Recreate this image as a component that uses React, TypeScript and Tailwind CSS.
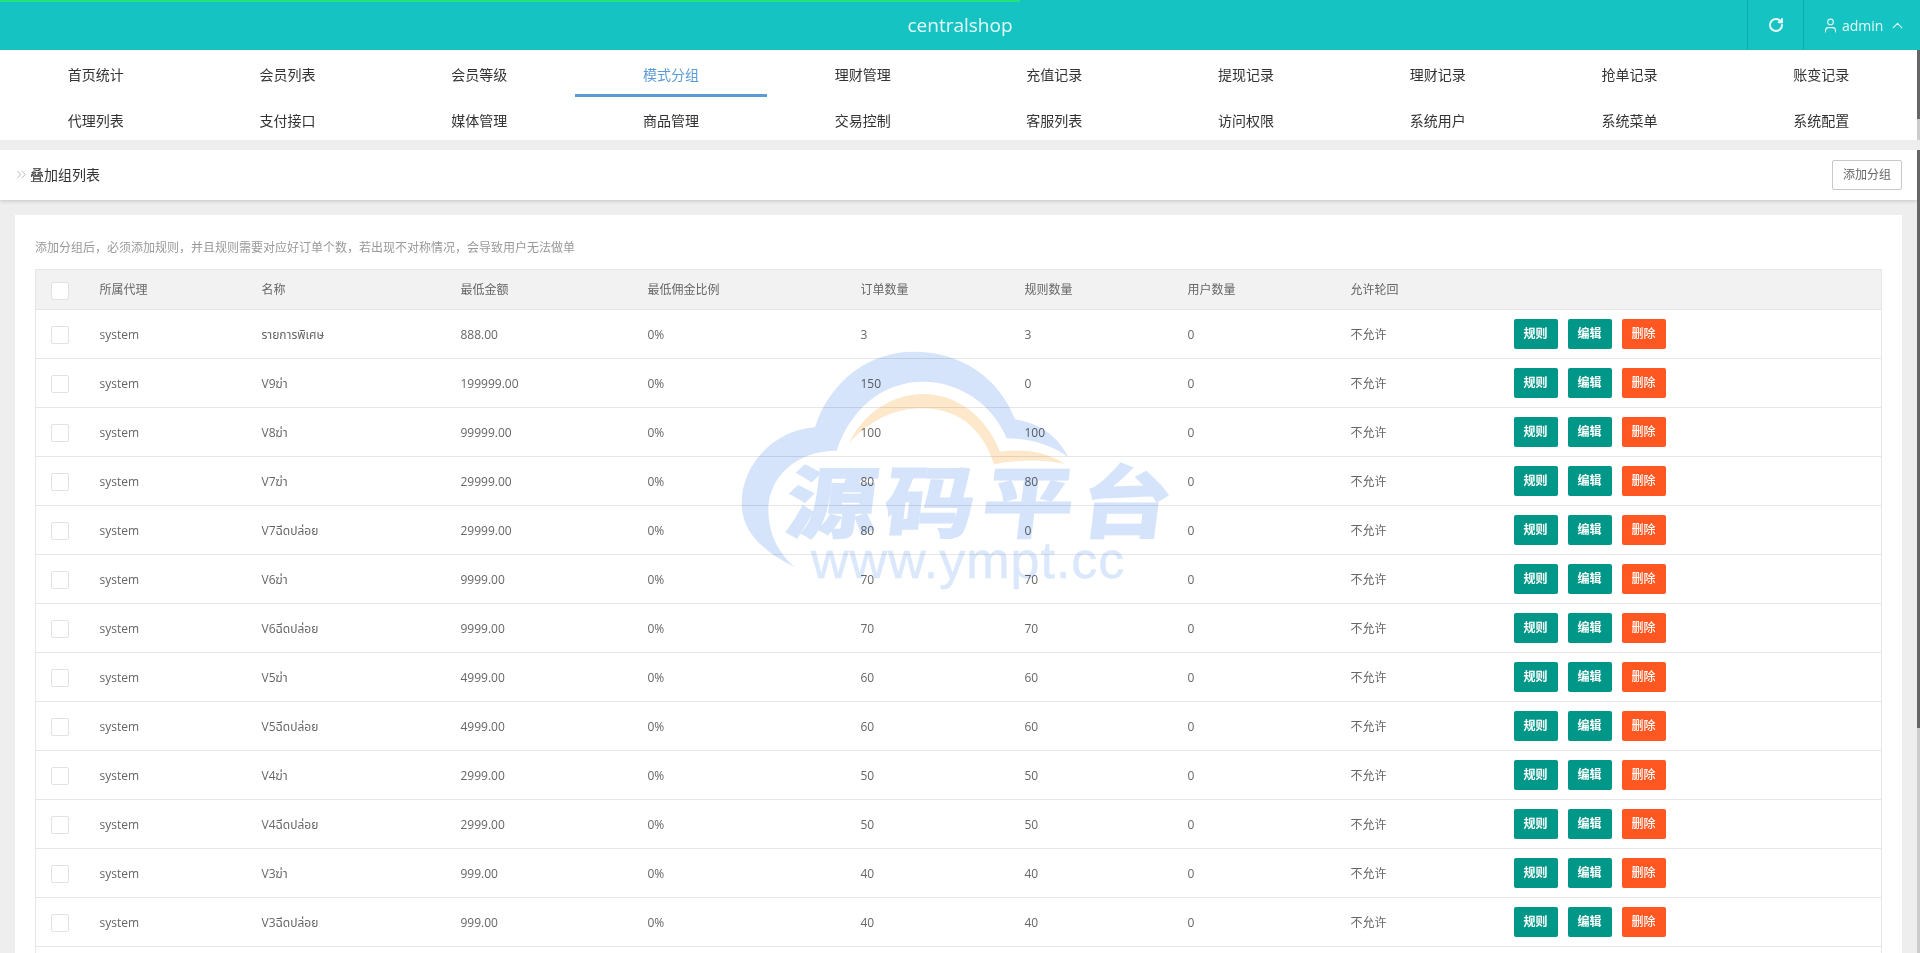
import { ChevronUp, ChevronsRight, RotateCw, User } from "lucide-react";

const navItems = [
  ["首页统计", "会员列表", "会员等级", "模式分组", "理财管理", "充值记录", "提现记录", "理财记录", "抢单记录", "账变记录"],
  ["代理列表", "支付接口", "媒体管理", "商品管理", "交易控制", "客服列表", "访问权限", "系统用户", "系统菜单", "系统配置"],
];

const columns = ["所属代理", "名称", "最低金额", "最低佣金比例", "订单数量", "规则数量", "用户数量", "允许轮回"];

const rows: [string, string, string, string][] = [
  ["รายการพิเศษ", "888.00", "3", "3"],
  ["V9ฆ่า", "199999.00", "150", "0"],
  ["V8ฆ่า", "99999.00", "100", "100"],
  ["V7ฆ่า", "29999.00", "80", "80"],
  ["V7ฉีดปล่อย", "29999.00", "80", "0"],
  ["V6ฆ่า", "9999.00", "70", "70"],
  ["V6ฉีดปล่อย", "9999.00", "70", "70"],
  ["V5ฆ่า", "4999.00", "60", "60"],
  ["V5ฉีดปล่อย", "4999.00", "60", "60"],
  ["V4ฆ่า", "2999.00", "50", "50"],
  ["V4ฉีดปล่อย", "2999.00", "50", "50"],
  ["V3ฆ่า", "999.00", "40", "40"],
  ["V3ฉีดปล่อย", "999.00", "40", "40"],
  ["V2ฆ่า", "499.00", "30", "30"],
];

function Checkbox() {
  return <div className="h-[18px] w-[18px] rounded-[2px] border border-[#e2e2e2] bg-white" />;
}

function Watermark() {
  return (
    <div className="pointer-events-none absolute left-[700px] top-[330px] h-[280px] w-[520px] mix-blend-multiply">
      <svg viewBox="0 0 1560 840" className="absolute inset-0 h-full w-full">
        <path
          fill="#d5e4fa"
          d="M285 712C180 660 125 600 125 520C125 400 225 300 345 292C390 150 510 65 640 65C790 65 900 150 945 268C1020 280 1075 320 1105 382C1060 345 990 325 920 325C880 225 780 155 670 155C545 155 450 240 410 362C290 362 205 440 205 540C205 610 235 670 285 712Z"
        />
        <path
          fill="#fde8cb"
          d="M447 340C490 250 575 192 670 192C770 192 860 260 900 365C970 355 1040 365 1095 402C1020 385 950 390 882 403C845 290 770 235 665 235C575 235 500 280 447 340Z"
        />
      </svg>
      <div className="absolute left-[88px] top-[122px] -skew-x-6 scale-y-[0.86] whitespace-nowrap text-[90px] font-bold leading-[90px] tracking-[8px] text-[#d5e4fa] [-webkit-text-stroke:3px_#d5e4fa] font-['Noto_Sans_CJK_SC',sans-serif]">
        源码平台
      </div>
      <div className="absolute left-[111px] top-[202px] whitespace-nowrap text-[52px] leading-[56px] tracking-[1px] text-[#dbe8fb] [-webkit-text-stroke:0.5px_#dbe8fb] font-['Liberation_Sans',sans-serif]">
        www.ympt.cc
      </div>
    </div>
  );
}

export default function App() {
  return (
    <div className="relative flex h-screen flex-col overflow-hidden bg-[#eeeeee] text-[#666666] font-['Open_Sans','Noto_Sans','Noto_Sans_Thai','Noto_Sans_CJK_SC',sans-serif]">
      {/* top bar */}
      <header className="relative flex h-[50px] shrink-0 items-center justify-end bg-[#15c3c3] text-white/90">
        <div className="absolute left-0 top-0 h-[2px] w-[1020px] bg-[#25e27f]" />
        <div className="absolute left-1/2 -translate-x-1/2 text-[19px] font-medium leading-[50px]">centralshop</div>
        <div className="flex h-full w-[56px] items-center justify-center border-l border-[#10abab]">
          <RotateCw size={16} strokeWidth={3} />
        </div>
        <div className="flex h-full w-[117px] items-center gap-[3px] border-l border-[#10abab] pl-[18px] text-[14px]">
          <User size={17} strokeWidth={1.5} />
          <span>admin</span>
          <ChevronUp size={17} strokeWidth={1.6} className="ml-[3px]" />
        </div>
      </header>

      {/* menu */}
      <div className="flex h-[90px] shrink-0">
        <nav className="h-full flex-1 overflow-hidden bg-white">
          {navItems.map((items, i) => (
            <div key={i} className="grid h-[47px] grid-cols-10">
              {items.map((label) => {
                const active = label === "模式分组";
                return (
                  <div
                    key={label}
                    className={
                      active
                        ? "flex items-center justify-center border-b-[3px] border-[#5b9bd5] pt-[5px] text-[14px] text-[#5b9bd5]"
                        : i === 0
                          ? "flex items-center justify-center pt-[5px] pb-[3px] text-[14px] text-[#333333]"
                          : "flex items-center justify-center pt-[3px] pb-[3px] text-[14px] text-[#333333]"
                    }
                  >
                    {label}
                  </div>
                );
              })}
            </div>
          ))}
        </nav>
        <div className="w-[3px] bg-[#cccccc]">
          <div className="h-[69px] bg-[#666666]" />
        </div>
      </div>

      <div className="h-[10px] shrink-0" />

      <div className="flex min-h-0 flex-1">
        <main className="min-w-0 flex-1 overflow-hidden">
          {/* page title */}
          <div className="flex h-[50px] items-center justify-between bg-white pl-[14px] pr-[15px] shadow-[0_1px_4px_rgba(0,0,0,0.18)]">
            <div className="flex items-center gap-[1px] pb-[2px] text-[14px] text-[#333333]">
              <ChevronsRight size={15} strokeWidth={1.1} className="text-[#999999]" />
              叠加组列表
            </div>
            <button className="h-[30px] w-[70px] rounded-[2px] border border-[#c9c9c9] bg-white text-[12px] text-[#666666]">
              添加分组
            </button>
          </div>

          {/* table panel */}
          <div className="ml-[15px] mr-[15px] mt-[15px] bg-white px-[20px] pt-[24px]">
            <p className="h-[18px] text-[12px] leading-[18px] text-[#999999]">
              添加分组后，必须添加规则，并且规则需要对应好订单个数，若出现不对称情况，会导致用户无法做单
            </p>
            <table className="mt-[12px] w-full table-fixed border-collapse border border-[#e6e6e6] text-[12px] text-[#666666]">
              <colgroup>
                <col className="w-[48px]" />
                <col className="w-[162px]" />
                <col className="w-[199px]" />
                <col className="w-[187px]" />
                <col className="w-[213px]" />
                <col className="w-[164px]" />
                <col className="w-[163px]" />
                <col className="w-[163px]" />
                <col className="w-[163px]" />
                <col />
              </colgroup>
              <thead>
                <tr className="h-[40px] bg-[#f2f2f2]">
                  <th className="pl-[15px] pt-[2px]">
                    <Checkbox />
                  </th>
                  {columns.map((c) => (
                    <th key={c} className="px-[16px] text-left font-normal">
                      {c}
                    </th>
                  ))}
                  <th />
                </tr>
              </thead>
              <tbody>
                {rows.map((r) => (
                  <tr key={r[0]} className="h-[49px] border-t border-[#e6e6e6]">
                    <td className="pl-[15px] pt-[2px]">
                      <Checkbox />
                    </td>
                    <td className="px-[16px] pt-[2px]">system</td>
                    <td className="px-[16px] pt-[2px]">{r[0]}</td>
                    <td className="px-[16px] pt-[2px]">{r[1]}</td>
                    <td className="px-[16px] pt-[2px]">0%</td>
                    <td className="px-[16px] pt-[2px]">{r[2]}</td>
                    <td className="px-[16px] pt-[2px]">{r[3]}</td>
                    <td className="px-[16px] pt-[2px]">0</td>
                    <td className="px-[16px] pt-[2px]">不允许</td>
                    <td className="px-[16px]">
                      <div className="flex gap-[10px]">
                        <button className="h-[30px] w-[44px] rounded-[2px] bg-[#009688] text-[12px] font-bold text-white">规则</button>
                        <button className="h-[30px] w-[44px] rounded-[2px] bg-[#009688] text-[12px] font-bold text-white">编辑</button>
                        <button className="h-[30px] w-[44px] rounded-[2px] bg-[#ff5722] text-[12px] font-medium text-white">删除</button>
                      </div>
                    </td>
                  </tr>
                ))}
              </tbody>
            </table>
          </div>
        </main>
        <div className="w-[3px] bg-[#cccccc]">
          <div className="h-[578px] bg-[#666666]" />
        </div>
      </div>

      <Watermark />
    </div>
  );
}
